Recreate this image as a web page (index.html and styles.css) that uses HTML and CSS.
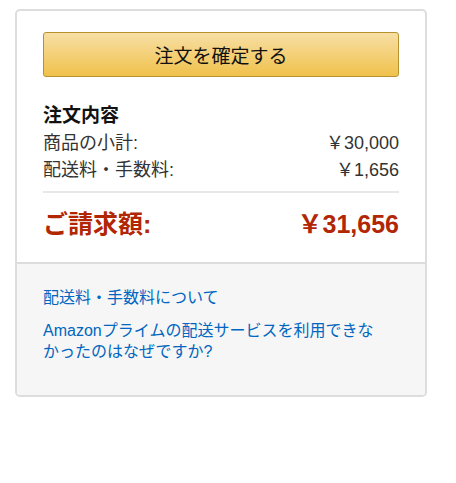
FILE: index.html
```html
<!DOCTYPE html>
<html lang="ja">
<head>
  <meta charset="UTF-8">
  <meta name="viewport" content="width=device-width, initial-scale=1.0">
  <title>注文を確定する</title>
  <link rel="stylesheet" href="styles.css">
</head>
<body>
  <!-- 注文サマリー -->
  <div class="summary-box">
    <div class="summary-main">
      <button class="place-order">注文を確定する</button>

      <h3 class="summary-title">注文内容</h3>
      <div class="summary-row">
        <span>商品の小計:</span>
        <span>￥30,000</span>
      </div>
      <div class="summary-row">
        <span>配送料・手数料:</span>
        <span>￥1,656</span>
      </div>

      <hr class="divider">

      <div class="summary-total">
        <span>ご請求額:</span>
        <span>￥31,656</span>
      </div>
    </div>

    <!-- ヘルプリンク -->
    <div class="summary-help">
      <a class="help-link" href="#">配送料・手数料について</a>
      <a class="help-link" href="#">Amazonプライムの配送サービスを利用できなかったのはなぜですか?</a>
    </div>
  </div>
</body>
</html>
```

FILE: styles.css
```css
body {
  margin: 0;
  padding: 9px 0 0 15px;
  background: #fff;
  font-family: 'Liberation Sans', Arial, 'Noto Sans CJK JP', sans-serif;
  color: #111;
}
.summary-box {
  box-sizing: border-box;
  width: 412px;
  border: 2px solid #ddd;
  border-radius: 5px;
  overflow: hidden;
}
.summary-main {
  padding: 21px 26px 22px;
}
.place-order {
  display: block;
  width: 100%;
  height: 45px;
  padding: 0;
  font-family: inherit;
  font-size: 19px;
  color: #111;
  background: linear-gradient(to bottom, #f7dfa5, #f0c14b);
  border: 1px solid #b8922f;
  border-radius: 3px;
  cursor: pointer;
}
.summary-title {
  margin: 25px 0 0;
  font-size: 19px;
  line-height: 28px;
  font-weight: bold;
}
.summary-row {
  display: flex;
  justify-content: space-between;
  font-size: 18px;
  line-height: 27px;
  color: #333;
}
.divider {
  margin: 7px 0 0;
  height: 2px;
  border: none;
  background: #e7e7e7;
}
.summary-total {
  display: flex;
  justify-content: space-between;
  margin-top: 15px;
  font-size: 25px;
  line-height: 32px;
  font-weight: bold;
  color: #b12704;
}
.summary-help {
  background: #f6f6f6;
  border-top: 2px solid #ddd;
  padding: 23px 40px 33px 26px;
}
.help-link {
  display: block;
  font-size: 16px;
  line-height: 21px;
  color: #0066c0;
  text-decoration: none;
}
.help-link + .help-link {
  margin-top: 12px;
}
```
